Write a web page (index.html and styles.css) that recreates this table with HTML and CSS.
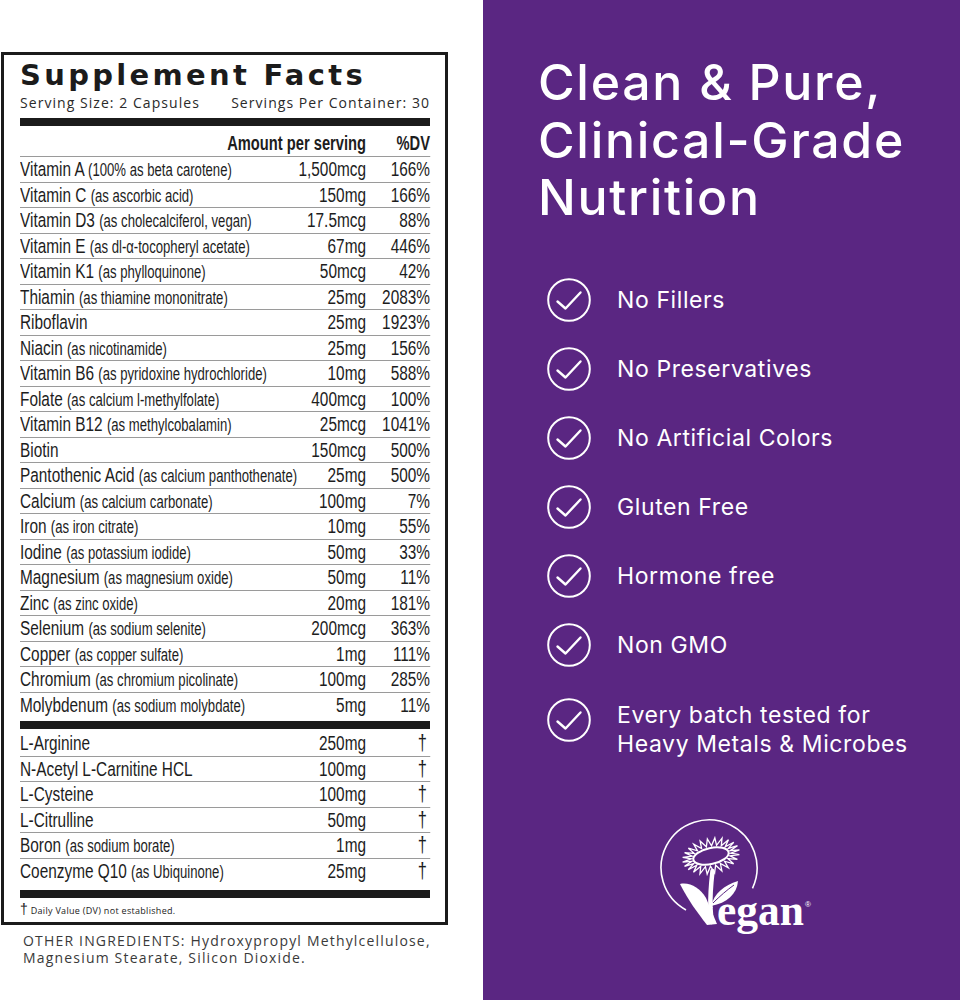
FILE: index.html
```html
<!DOCTYPE html>
<html lang="en">
<head>
<meta charset="utf-8">
<title>Supplement Facts</title>
<link rel="stylesheet" href="styles.css">
</head>
<body>
<div class="page">
  <section class="left">
    <div class="facts">
      <h1 class="title">Supplement Facts</h1>
      <div class="serving"><span>Serving Size: 2 Capsules</span><span>Servings Per Container: 30</span></div>
      <div class="bar"></div>
      <div class="row head"><span class="name"></span><span class="amt">Amount per serving</span><span class="dv">%DV</span></div>
      <div class="group">
        <div class="row"><span class="name">Vitamin A <small>(100% as beta carotene)</small></span><span class="amt">1,500mcg</span><span class="dv">166%</span></div>
        <div class="row"><span class="name">Vitamin C <small>(as ascorbic acid)</small></span><span class="amt">150mg</span><span class="dv">166%</span></div>
        <div class="row"><span class="name">Vitamin D3 <small>(as cholecalciferol, vegan)</small></span><span class="amt">17.5mcg</span><span class="dv">88%</span></div>
        <div class="row"><span class="name">Vitamin E <small>(as dl-α-tocopheryl acetate)</small></span><span class="amt">67mg</span><span class="dv">446%</span></div>
        <div class="row"><span class="name">Vitamin K1 <small>(as phylloquinone)</small></span><span class="amt">50mcg</span><span class="dv">42%</span></div>
        <div class="row"><span class="name">Thiamin <small>(as thiamine mononitrate)</small></span><span class="amt">25mg</span><span class="dv">2083%</span></div>
        <div class="row"><span class="name">Riboflavin</span><span class="amt">25mg</span><span class="dv">1923%</span></div>
        <div class="row"><span class="name">Niacin <small>(as nicotinamide)</small></span><span class="amt">25mg</span><span class="dv">156%</span></div>
        <div class="row"><span class="name">Vitamin B6 <small>(as pyridoxine hydrochloride)</small></span><span class="amt">10mg</span><span class="dv">588%</span></div>
        <div class="row"><span class="name">Folate <small>(as calcium l-methylfolate)</small></span><span class="amt">400mcg</span><span class="dv">100%</span></div>
        <div class="row"><span class="name">Vitamin B12 <small>(as methylcobalamin)</small></span><span class="amt">25mcg</span><span class="dv">1041%</span></div>
        <div class="row"><span class="name">Biotin</span><span class="amt">150mcg</span><span class="dv">500%</span></div>
        <div class="row"><span class="name">Pantothenic Acid <small>(as calcium panthothenate)</small></span><span class="amt">25mg</span><span class="dv">500%</span></div>
        <div class="row"><span class="name">Calcium <small>(as calcium carbonate)</small></span><span class="amt">100mg</span><span class="dv">7%</span></div>
        <div class="row"><span class="name">Iron <small>(as iron citrate)</small></span><span class="amt">10mg</span><span class="dv">55%</span></div>
        <div class="row"><span class="name">Iodine <small>(as potassium iodide)</small></span><span class="amt">50mg</span><span class="dv">33%</span></div>
        <div class="row"><span class="name">Magnesium <small>(as magnesium oxide)</small></span><span class="amt">50mg</span><span class="dv">11%</span></div>
        <div class="row"><span class="name">Zinc <small>(as zinc oxide)</small></span><span class="amt">20mg</span><span class="dv">181%</span></div>
        <div class="row"><span class="name">Selenium <small>(as sodium selenite)</small></span><span class="amt">200mcg</span><span class="dv">363%</span></div>
        <div class="row"><span class="name">Copper <small>(as copper sulfate)</small></span><span class="amt">1mg</span><span class="dv">111%</span></div>
        <div class="row"><span class="name">Chromium <small>(as chromium picolinate)</small></span><span class="amt">100mg</span><span class="dv">285%</span></div>
        <div class="row"><span class="name">Molybdenum <small>(as sodium molybdate)</small></span><span class="amt">5mg</span><span class="dv">11%</span></div>
      </div>
      <div class="bar bar-mid"></div>
      <div class="group group-2">
        <div class="row"><span class="name">L-Arginine</span><span class="amt">250mg</span><span class="dv dag">†</span></div>
        <div class="row"><span class="name">N-Acetyl L-Carnitine HCL</span><span class="amt">100mg</span><span class="dv dag">†</span></div>
        <div class="row"><span class="name">L-Cysteine</span><span class="amt">100mg</span><span class="dv dag">†</span></div>
        <div class="row"><span class="name">L-Citrulline</span><span class="amt">50mg</span><span class="dv dag">†</span></div>
        <div class="row"><span class="name">Boron <small>(as sodium borate)</small></span><span class="amt">1mg</span><span class="dv dag">†</span></div>
        <div class="row"><span class="name">Coenzyme Q10 <small>(as Ubiquinone)</small></span><span class="amt">25mg</span><span class="dv dag">†</span></div>
      </div>
      <div class="bar bar-end"></div>
      <p class="foot"><span class="foot-dag">†</span> Daily Value (DV) not established.</p>
    </div>
    <p class="other">OTHER INGREDIENTS: Hydroxypropyl Methylcellulose,<br>Magnesium Stearate, Silicon Dioxide.</p>
  </section>

  <section class="right">
    <h2 class="headline">Clean &amp; Pure,<br>Clinical-Grade<br>Nutrition</h2>
    <ul class="claims">
      <li class="claim"><svg class="chk" viewBox="0 0 44 44"><circle cx="22" cy="22" r="20.8" fill="none" stroke="#fff" stroke-width="2"/><path d="M10.5 23.5 L18.5 30.5 L33.5 14.5" fill="none" stroke="#fff" stroke-width="2.4" stroke-linecap="round" stroke-linejoin="round"/></svg><span class="claim-text">No Fillers</span></li>
      <li class="claim"><svg class="chk" viewBox="0 0 44 44"><circle cx="22" cy="22" r="20.8" fill="none" stroke="#fff" stroke-width="2"/><path d="M10.5 23.5 L18.5 30.5 L33.5 14.5" fill="none" stroke="#fff" stroke-width="2.4" stroke-linecap="round" stroke-linejoin="round"/></svg><span class="claim-text">No Preservatives</span></li>
      <li class="claim"><svg class="chk" viewBox="0 0 44 44"><circle cx="22" cy="22" r="20.8" fill="none" stroke="#fff" stroke-width="2"/><path d="M10.5 23.5 L18.5 30.5 L33.5 14.5" fill="none" stroke="#fff" stroke-width="2.4" stroke-linecap="round" stroke-linejoin="round"/></svg><span class="claim-text">No Artificial Colors</span></li>
      <li class="claim"><svg class="chk" viewBox="0 0 44 44"><circle cx="22" cy="22" r="20.8" fill="none" stroke="#fff" stroke-width="2"/><path d="M10.5 23.5 L18.5 30.5 L33.5 14.5" fill="none" stroke="#fff" stroke-width="2.4" stroke-linecap="round" stroke-linejoin="round"/></svg><span class="claim-text">Gluten Free</span></li>
      <li class="claim"><svg class="chk" viewBox="0 0 44 44"><circle cx="22" cy="22" r="20.8" fill="none" stroke="#fff" stroke-width="2"/><path d="M10.5 23.5 L18.5 30.5 L33.5 14.5" fill="none" stroke="#fff" stroke-width="2.4" stroke-linecap="round" stroke-linejoin="round"/></svg><span class="claim-text">Hormone free</span></li>
      <li class="claim"><svg class="chk" viewBox="0 0 44 44"><circle cx="22" cy="22" r="20.8" fill="none" stroke="#fff" stroke-width="2"/><path d="M10.5 23.5 L18.5 30.5 L33.5 14.5" fill="none" stroke="#fff" stroke-width="2.4" stroke-linecap="round" stroke-linejoin="round"/></svg><span class="claim-text">Non GMO</span></li>
      <li class="claim claim-multi"><svg class="chk" viewBox="0 0 44 44"><circle cx="22" cy="22" r="20.8" fill="none" stroke="#fff" stroke-width="2"/><path d="M10.5 23.5 L18.5 30.5 L33.5 14.5" fill="none" stroke="#fff" stroke-width="2.4" stroke-linecap="round" stroke-linejoin="round"/></svg><span class="claim-text">Every batch tested for<br>Heavy Metals &amp; Microbes</span></li>
    </ul>
    <svg class="vegan" viewBox="652 818 160 135" aria-label="Vegan">
      <path d="M686 910 A48 48 0 1 1 752.5 888.3" fill="none" stroke="#fff" stroke-width="1.6"/>
      <g transform="translate(711 856) rotate(-12)">
        <polygon fill="none" stroke="#fff" stroke-width="1.3" stroke-linejoin="miter" points="29,0 19.83,1.31 28.02,4.53 18.48,3.83 25.11,8.75 15.87,6.09 20.51,12.37 12.18,7.93 14.5,15.16 7.65,9.24 7.51,16.9 2.61,9.91 0,17.5 -2.61,9.91 -7.51,16.9 -7.65,9.24 -14.5,15.16 -12.18,7.93 -20.51,12.37 -15.87,6.09 -25.11,8.75 -18.48,3.83 -28.02,4.53 -19.83,1.31 -29,0 -19.83,-1.31 -28.02,-4.53 -18.48,-3.83 -25.11,-8.75 -15.87,-6.09 -20.51,-12.37 -12.18,-7.93 -14.5,-15.16 -7.65,-9.24 -7.51,-16.9 -2.61,-9.91 0,-17.5 2.61,-9.91 7.51,-16.9 7.65,-9.24 14.5,-15.16 12.18,-7.93 20.51,-12.37 15.87,-6.09 25.11,-8.75 18.48,-3.83 28.02,-4.53 19.83,-1.31"/>
        <ellipse cx="0" cy="0" rx="18" ry="8" fill="#5a2682" stroke="#fff" stroke-width="2"/>
      </g>
      <path d="M712.5 871 C711 884 710 896 710.5 908 L711.5 922" fill="none" stroke="#fff" stroke-width="4.5" stroke-linecap="round"/>
      <path d="M711 906 C714 894 724 885 738 881 C737 894 727 903 711 906 Z" fill="#fff"/>
      <path d="M713 903 C720 896 727 890 734 885" fill="none" stroke="#5a2682" stroke-width="1"/>
      <path d="M680 884 C690 882 700 888 706 898 L717 924 L707 925 C697 912 688 900 680 884 Z" fill="#fff"/>
      <text class="vegan-word" x="717" y="925" textLength="87" lengthAdjust="spacingAndGlyphs">egan</text>
      <text class="vegan-reg" x="805" y="907">®</text>
    </svg>
  </section>
</div>
</body>
</html>
```

FILE: styles.css
```css
html, body {
  margin: 0;
  padding: 0;
  background: #ffffff;
}

.page {
  display: flex;
  width: 960px;
  height: 1000px;
  overflow: hidden;
}

/* ---------- left: supplement facts ---------- */
.left {
  width: 483px;
  flex: none;
  padding-top: 52px;
  box-sizing: border-box;
}

.facts {
  box-sizing: border-box;
  width: 447px;
  margin-left: 1px;
  border: 3px solid #1b1b1b;
  padding: 5px 15px 0 16px;
  color: #1d1d1d;
}

.title {
  margin: 0;
  font-family: "DejaVu Sans", sans-serif;
  font-weight: 700;
  font-size: 29px;
  line-height: 30px;
  letter-spacing: 3.3px;
  color: #1b1b1b;
  white-space: nowrap;
}

.serving {
  display: flex;
  justify-content: space-between;
  margin-top: 4px;
  font-family: "Open Sans", sans-serif;
  font-size: 14px;
  line-height: 18px;
  letter-spacing: 1.05px;
  color: #2a2a2a;
  white-space: nowrap;
}

.bar {
  height: 8px;
  background: #1b1b1b;
  margin-top: 6px;
}
.bar-mid { margin-top: 3px; }
.bar-end { margin-top: 6px; }

/* The label face is a narrow grotesque: Liberation Sans drawn at 75% width. */
.row {
  display: flex;
  align-items: baseline;
  box-sizing: border-box;
  width: 546.67px;
  height: 25.5px;
  border-bottom: 1px solid #9a9a9a;
  font-family: "Liberation Sans", Arial, sans-serif;
  font-size: 20.5px;
  line-height: 24.5px;
  white-space: nowrap;
  transform: scaleX(0.75);
  transform-origin: 0 0;
}
.group .row:last-child {
  border-bottom: none;
}

.group-2 { margin-top: 2px; }

.name {
  flex: 1 1 auto;
  min-width: 0;
}
.name small {
  font-size: 17.5px;
}

.amt {
  flex: none;
  text-align: right;
}
.dv {
  flex: none;
  width: 85.33px;
  text-align: right;
}
.dag {
  font-family: "Liberation Sans", Arial, sans-serif;
  font-size: 22px;
  color: #1d1d1d;
  padding-right: 4px;
  box-sizing: border-box;
}

.head {
  height: 31px;
  padding-top: 4px;
  line-height: 26px;
  font-weight: 700;
  font-size: 19.6px;
}

.foot {
  margin: 0;
  height: 24px;
  font-family: "Open Sans", sans-serif;
  font-size: 9px;
  line-height: 22px;
  letter-spacing: 0.3px;
  color: #222;
  white-space: nowrap;
}
.foot-dag {
  font-family: "Liberation Sans", sans-serif;
  font-size: 14px;
}

.other {
  margin: 7px 0 0 23px;
  font-family: "Open Sans", sans-serif;
  font-size: 14px;
  line-height: 17px;
  letter-spacing: 1.18px;
  color: #3a3a3a;
  white-space: nowrap;
}

/* ---------- right: purple panel ---------- */
.right {
  flex: 1;
  background: #5a2682;
  color: #ffffff;
  padding: 54px 0 0 55px;
  box-sizing: border-box;
  font-family: "Inter", sans-serif;
}

.headline {
  margin: 0;
  font-weight: 500;
  font-size: 50px;
  line-height: 57.5px;
  letter-spacing: 1.7px;
  white-space: nowrap;
}

.claims {
  list-style: none;
  margin: 51.5px 0 0 9px;
  padding: 0;
  display: flex;
  flex-direction: column;
  gap: 25px;
}

.claim {
  display: flex;
  align-items: flex-start;
  gap: 26px;
}

.chk {
  width: 44px;
  height: 44px;
  flex: none;
  display: block;
}

.claim-text {
  font-size: 23px;
  line-height: 44px;
  letter-spacing: 0.6px;
  white-space: nowrap;
}

.claim-multi {
  margin-top: 6px;
}
.claim-multi .claim-text {
  line-height: 29px;
  padding-top: 2.5px;
}

.vegan {
  display: block;
  width: 160px;
  height: 135px;
  margin: 59.5px 0 0 114px;
}

.vegan-word {
  font-family: "Liberation Serif", serif;
  font-weight: 700;
  font-size: 44px;
  fill: #ffffff;
}
.vegan-reg {
  font-family: "Liberation Sans", sans-serif;
  font-size: 8px;
  fill: #ffffff;
}
```
